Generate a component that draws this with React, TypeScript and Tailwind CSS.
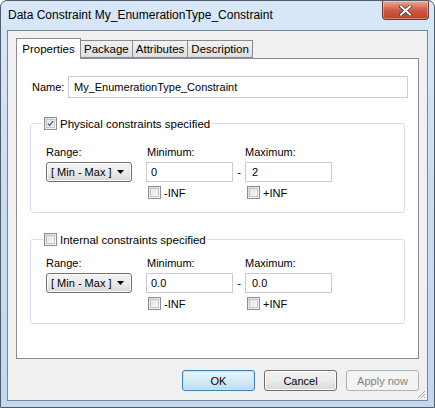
import React from 'react';

function Check({ checked }: { checked?: boolean }) {
  return (
    <span className="flex h-[13px] w-[13px] shrink-0 items-center justify-center border border-[#8e8f8f] bg-linear-to-br from-[#dcdcdc] to-[#fbfbfb]">
      <span className="flex h-[9px] w-[9px] items-center justify-center border border-[#c6c6c6] bg-linear-to-br from-[#e4e4e4] to-[#f8f8f8]">
        {checked && (
          <svg width="9" height="9" viewBox="0 0 9 9">
            <path d="M1.2 4.6 L3.4 7 L7.8 1.4" fill="none" stroke="#4a5f97" strokeWidth="1.7" />
          </svg>
        )}
      </span>
    </span>
  );
}

function RangeGroup({ label, checked, min, max, tight }: { label: string; checked?: boolean; min: string; max: string; tight?: boolean }) {
  return (
    <fieldset className="mx-[13px] rounded-[3px] border border-[#d5dfe5] px-[15px] pb-[13px]">
      <legend className="ml-[-3px] flex h-[15px] items-center gap-[3px] px-[1px]">
        <Check checked={checked} />
        <span className="text-[11.5px]">{label}</span>
      </legend>
      <div className={`flex items-start ${tight ? 'pt-[8px]' : 'pt-[13px]'}`}>
        <div className="flex w-[100px] flex-col">
          <span className="h-[16px] leading-[16px]">Range:</span>
          <div className="mt-[2px] flex h-[20px] w-[86px] items-center justify-between rounded-[3px] border border-[#707070] bg-linear-to-b from-[#f2f2f2] via-[#ebebeb] to-[#d8d8d8] pl-[4px] pr-[7px] shadow-[inset_0_0_0_1px_#fcfcfc]">
            <span>[ Min - Max ]</span>
            <svg width="7" height="4" viewBox="0 0 7 4"><path d="M0 0 H7 L3.5 4 Z" fill="#000" /></svg>
          </div>
        </div>
        <div className="flex w-[87px] flex-col">
          <span className="h-[16px] pl-[1px] leading-[16px]">Minimum:</span>
          <div className="mt-[2px] flex h-[20px] items-center border border-[#c9ccd2] bg-white pl-[4px]">{min}</div>
          <div className="mt-[4px] flex h-[13px] items-center gap-[3px] pl-[2px]">
            <Check />
            <span>-INF</span>
          </div>
        </div>
        <span className="mt-[20px] w-[12px] text-center leading-[16px]">-</span>
        <div className="flex w-[87px] flex-col">
          <span className="h-[16px] leading-[16px]">Maximum:</span>
          <div className="mt-[2px] flex h-[20px] items-center border border-[#c9ccd2] bg-white pl-[6px]">{max}</div>
          <div className="mt-[4px] flex h-[13px] items-center gap-[3px] pl-[2px]">
            <Check />
            <span>+INF</span>
          </div>
        </div>
      </div>
    </fieldset>
  );
}

export default function App() {
  const tabs = ['Package', 'Attributes', 'Description'];
  return (
    <div className="h-[408px] w-[435px] overflow-hidden bg-white text-[11px] leading-[14px] text-black [font-family:'Liberation_Sans',Arial,sans-serif]">
      <div className="flex h-full w-full flex-col rounded-t-[7px] border border-[#515c6a] bg-linear-to-b from-[#d9e8f8] via-[#c8dcf2] to-[#c2d8f1] px-[6px] pb-[6px]">
        {/* Title bar */}
        <div className="flex h-[29px] shrink-0 items-start justify-between">
          <span className="mt-[6px] pl-[1px] text-[12px] leading-[16px] text-black">Data Constraint My_EnumerationType_Constraint</span>
          <div className="mr-[-1px] flex h-[19px] w-[47px] items-center justify-center rounded-b-[4px] border border-t-0 border-[#6b3a36] bg-linear-to-b from-[#e9a99c] via-[#d05a44] to-[#c1402c] shadow-[inset_0_0_0_1px_rgba(255,255,255,0.35)]">
            <svg width="13" height="11" viewBox="0 0 13 11">
              <path d="M2 1.5 L11 9.5 M11 1.5 L2 9.5" stroke="#3b3b3b" strokeWidth="3.6" strokeLinecap="square" />
              <path d="M2 1.5 L11 9.5 M11 1.5 L2 9.5" stroke="#ffffff" strokeWidth="2" strokeLinecap="square" />
            </svg>
          </div>
        </div>

        {/* Client */}
        <div className="relative flex flex-1 flex-col border border-[#7c8794] bg-[#f0f0f0] px-[8px] pt-[7px]">
          {/* Tabs */}
          <div className="flex h-[20px] items-end">
            <div className="relative z-10 mb-[-1px] flex h-[21px] w-[65px] items-start justify-center border border-b-0 border-[#898c95] bg-white pt-[3px] text-[11.5px]">
              Properties
            </div>
            {tabs.map((t) => (
              <div key={t} className="ml-[-1px] flex h-[18px] items-center border border-[#898c95] bg-linear-to-b from-[#f2f2f2] to-[#dedede] px-[3px] text-[11.5px]">
                {t}
              </div>
            ))}
          </div>

          {/* Panel */}
          <div className="h-[301px] border border-[#898c95] bg-white">
            <div className="flex items-center pt-[17px] pl-[15px] pr-[10px]">
              <span className="w-[36px]">Name:</span>
              <div className="flex h-[22px] flex-1 items-center border border-[#c9ccd2] bg-white pl-[5px]">My_EnumerationType_Constraint</div>
            </div>
            <div className="mt-[18px]">
              <RangeGroup label="Physical constraints specified" checked min="0" max="2" />
            </div>
            <div className="mt-[19px]">
              <RangeGroup label="Internal  constraints specified" min="0.0" max="0.0" tight />
            </div>
          </div>

          {/* Buttons */}
          <div className="flex justify-end gap-[9px] pt-[11px]">
            <div className="flex h-[21px] w-[73px] items-center justify-center rounded-[3px] border border-[#3c7fb1] bg-linear-to-b from-[#e9f4fb] via-[#d6ebf7] to-[#bcdcf0] shadow-[inset_0_0_0_1px_#bfe6f9]">OK</div>
            <div className="flex h-[21px] w-[73px] items-center justify-center rounded-[3px] border border-[#707070] bg-linear-to-b from-[#f2f2f2] via-[#ebebeb] to-[#d7d7d7] shadow-[inset_0_0_0_1px_#fcfcfc]">Cancel</div>
            <div className="flex h-[21px] w-[73px] items-center justify-center rounded-[3px] border border-[#adb2b5] bg-[#f4f4f4] text-[#838383]">Apply now</div>
          </div>

          <svg className="absolute right-[1px] bottom-[1px]" width="10" height="10" viewBox="0 0 10 10">
            <path d="M9 2 L2 9 M9 5 L5 9 M9 8 L8 9" stroke="#a7a7a7" strokeWidth="1" />
          </svg>
        </div>
      </div>
    </div>
  );
}
